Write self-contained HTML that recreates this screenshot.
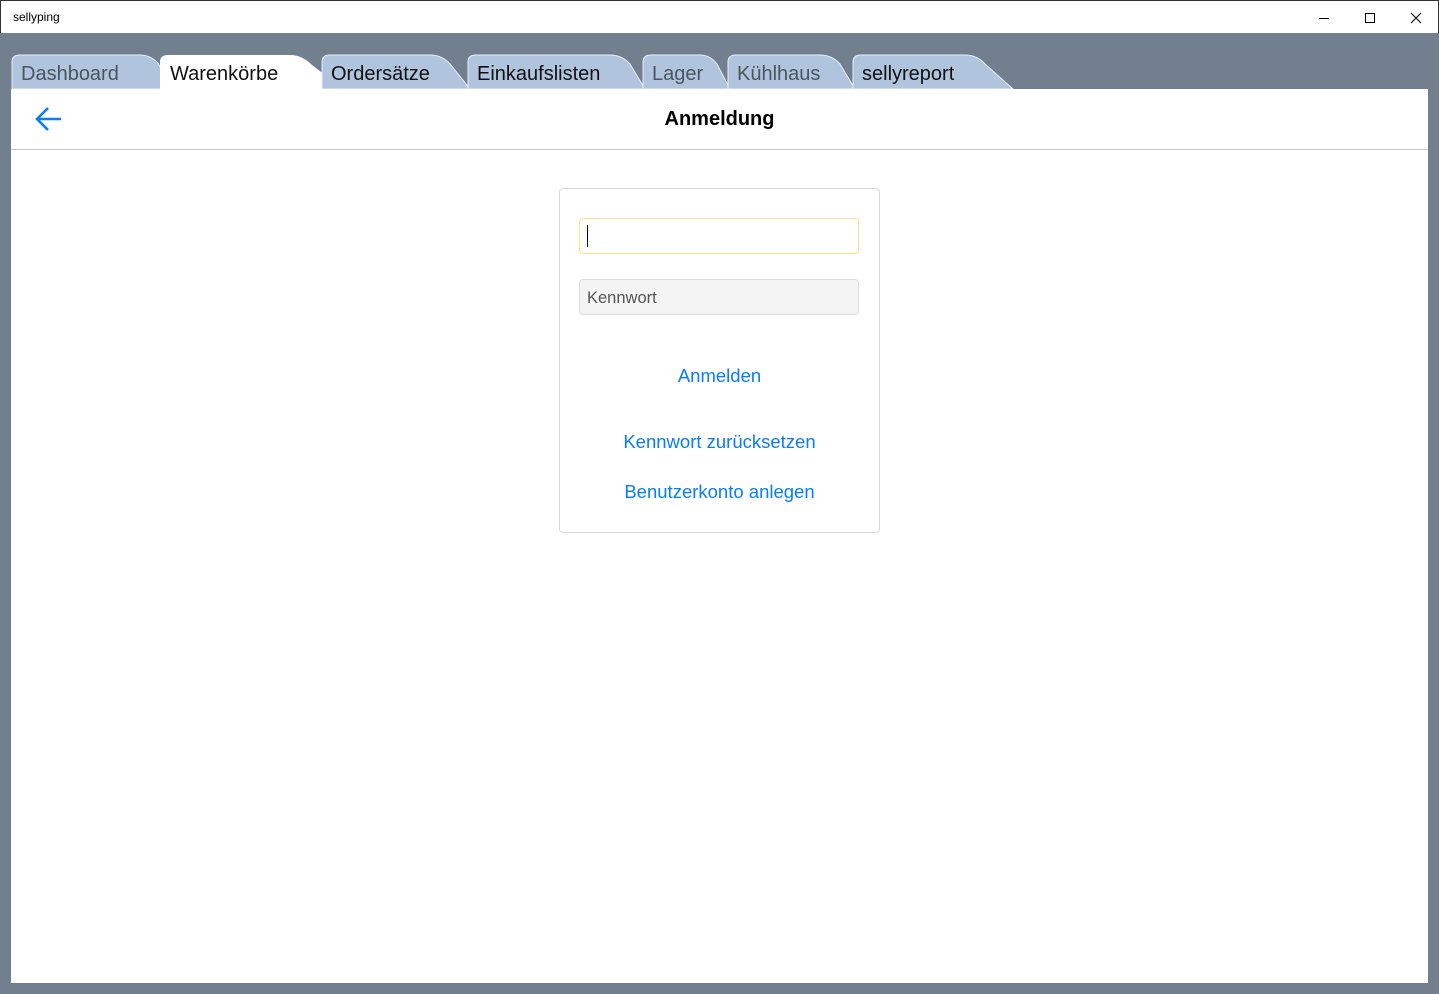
<!DOCTYPE html>
<html><head><meta charset="utf-8"><style>
body{margin:0;width:1439px;height:994px;overflow:hidden;background:#717f8f;font-family:"Liberation Sans",sans-serif;position:relative}
.title{position:absolute;left:0;top:0;height:33px;background:#fff;border:1px solid #333;border-bottom:none;box-sizing:border-box;width:1439px}
.title span{position:absolute;left:12px;top:9px;font-size:12px;color:#000}
.content{position:absolute;left:11px;top:89px;width:1417px;height:894px;background:#fff}
.hdr{position:absolute;left:0;top:0;width:100%;height:60px;border-bottom:1px solid #c8c8c8}
.card{position:absolute;left:548px;top:99px;width:319px;height:343px;border:1px solid #d8d8d8;border-radius:4px}
.in{position:absolute;left:19px;width:280px;height:36px;border-radius:4px;box-sizing:border-box}
.lnk{position:absolute;left:0;width:100%;text-align:center;color:#0a7cf5;font-size:18.5px}
</style></head><body>
<div class="title"><span>sellyping</span>
<svg style="position:absolute;left:1310px;top:10px" width="120" height="14" fill="none" stroke="#000" stroke-width="1"><path d="M8 7.5H18"/><path d="M54.5 2.5h9v9h-9z"/><path d="M100 2l10 10M110 2l-10 10"/></svg></div>
<svg style="position:absolute;left:0;top:33px" width="1439" height="56">
<g font-family="Liberation Sans,sans-serif" font-size="20">
<path d="M12 56V29Q12 22 20 22H140Q150 22 158 30L172 56Z" fill="#b0c4de" stroke="#e8eef6"/>
<text x="21" y="47" fill="#4a5560">Dashboard</text>
<path d="M160 56V29Q160 22 168 22H290Q302 22 312 32L343 56Z" fill="#fff"/>
<text x="170" y="47" fill="#111">Warenkörbe</text>
<path d="M322 56V29Q322 22 330 22H430Q442 22 450 31L470 56Z" fill="#b0c4de" stroke="#e8eef6"/>
<text x="331" y="47" fill="#111">Ordersätze</text>
<path d="M468 56V29Q468 22 476 22H610Q622 22 630 31L645 56Z" fill="#b0c4de" stroke="#e8eef6"/>
<text x="477" y="47" fill="#111">Einkaufslisten</text>
<path d="M643 56V29Q643 22 651 22H700Q710 22 717 31L730 56Z" fill="#b0c4de" stroke="#e8eef6"/>
<text x="652" y="47" fill="#4a5560">Lager</text>
<path d="M728 56V29Q728 22 736 22H820Q832 22 840 31L855 56Z" fill="#b0c4de" stroke="#e8eef6"/>
<text x="737" y="47" fill="#4a5560">Kühlhaus</text>
<path d="M853 56V29Q853 22 861 22H965Q977 22 985 31L1013 56Z" fill="#b0c4de" stroke="#e8eef6"/>
<text x="862" y="47" fill="#111">sellyreport</text>
</g></svg>
<div class="content">
<div class="hdr">
<svg style="position:absolute;left:24px;top:18px" width="28" height="26" fill="none" stroke="#0a7cf5" stroke-width="2.6"><path d="M2 12H26M13 1L2 12L13 23"/></svg>
<div style="position:absolute;left:0;width:100%;top:19px;text-align:center;font-size:20px;font-weight:bold;color:#000">Anmeldung</div>
</div>
<div class="card">
<div class="in" style="top:29px;border:1px solid #ffe08a;background:#fff"><div style="position:absolute;left:7px;top:6px;width:1px;height:22px;background:#000"></div></div>
<div class="in" style="top:90px;border:1px solid #ddd;background:#f4f4f4;color:#555;font-size:16.5px;padding:9px 7px">Kennwort</div>
<div class="lnk" style="top:176px">Anmelden</div>
<div class="lnk" style="top:242px">Kennwort zurücksetzen</div>
<div class="lnk" style="top:292px">Benutzerkonto anlegen</div>
</div>
</div>
</body></html>
